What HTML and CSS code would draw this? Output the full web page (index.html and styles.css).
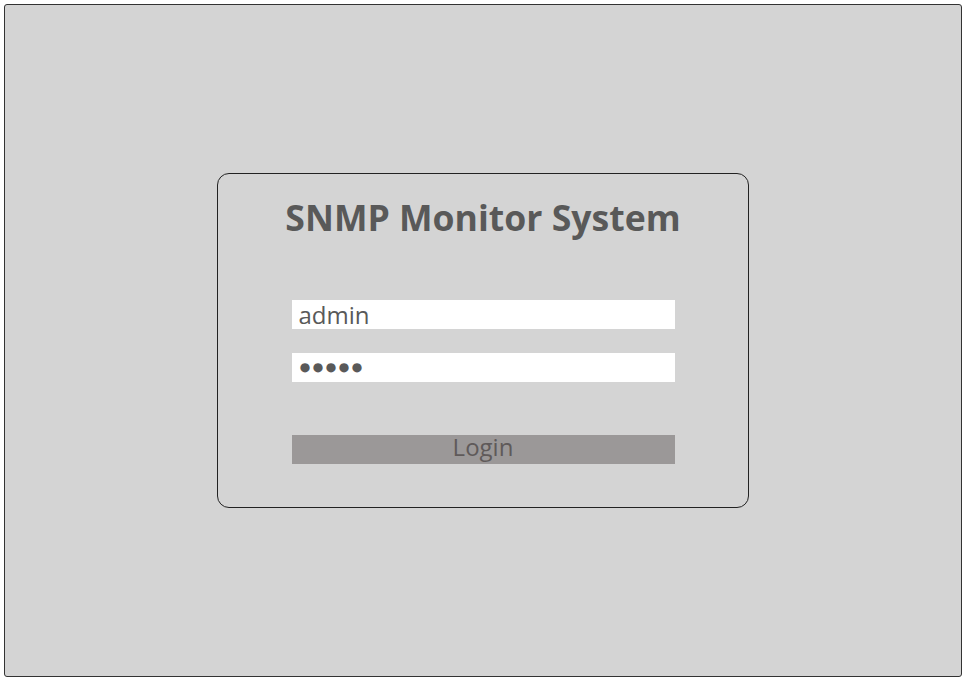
FILE: index.html
```html
<!DOCTYPE html>
<html>
<head>
<meta charset="utf-8">
<link rel="stylesheet" href="styles.css">
</head>
<body>
<div class="frame">
  <form class="card">
    <h1 class="title">SNMP Monitor System</h1>
    <input class="field" type="text" value="admin">
    <input class="field field-pass" type="text" value="●●●●●">
    <button class="login" type="button">Login</button>
  </form>
</div>
</body>
</html>
```
FILE: styles.css
```css
html, body {
  margin: 0;
  padding: 0;
  background: #ffffff;
}
body {
  padding: 4px 3px 8px 4px;
  font-family: "Open Sans", "Liberation Sans", sans-serif;
}
.frame {
  box-sizing: border-box;
  width: 958px;
  height: 673px;
  border: 1px solid #333333;
  border-radius: 3px;
  background: #d4d4d4;
  display: flex;
  align-items: center;
  justify-content: center;
}
.card {
  box-sizing: border-box;
  width: 532px;
  height: 335px;
  border: 1px solid #222222;
  border-radius: 12px;
  display: flex;
  flex-direction: column;
  align-items: center;
  padding-top: 20px;
  margin: 0;
}
.title {
  margin: 0;
  font-size: 35.6px;
  line-height: 46px;
  font-weight: 700;
  color: #595959;
  letter-spacing: 0;
}
.field {
  box-sizing: border-box;
  width: 383px;
  height: 29px;
  border: none;
  background: #ffffff;
  padding: 0 7px;
  font-family: "Open Sans", "Liberation Sans", sans-serif;
  font-size: 24px;
  color: #595959;
  outline: none;
}
.field:first-of-type {
  margin-top: 60px;
}
.field-pass {
  margin-top: 24px;
  font-family: "Liberation Sans", sans-serif;
  font-size: 21.5px;
}
.login {
  box-sizing: border-box;
  width: 383px;
  height: 29px;
  margin-top: 53px;
  border: none;
  background: #9b9898;
  color: #5f5a5a;
  font-family: "Open Sans", "Liberation Sans", sans-serif;
  font-size: 24px;
  line-height: 20px;
  padding: 0 0 6px;
}
```
